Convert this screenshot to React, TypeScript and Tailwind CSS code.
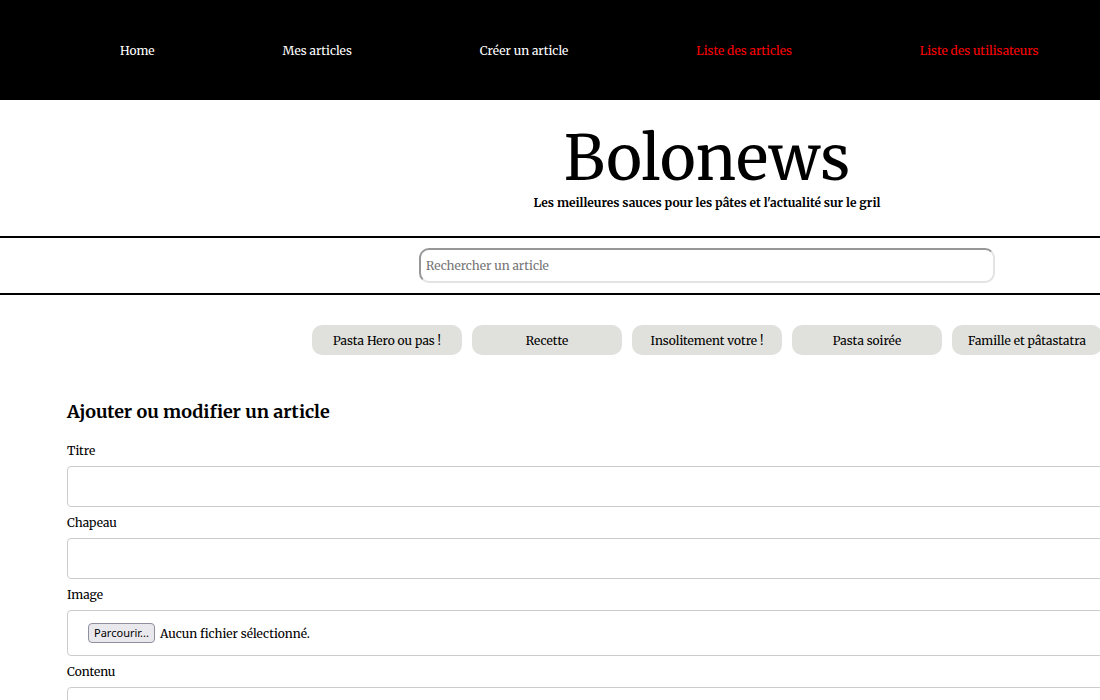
import React from "react";

const links = [
  { label: "Home", admin: false },
  { label: "Mes articles", admin: false },
  { label: "Créer un article", admin: false },
  { label: "Liste des articles", admin: true },
  { label: "Liste des utilisateurs", admin: true },
];

const categories = [
  "Pasta Hero ou pas !",
  "Recette",
  "Insolitement votre !",
  "Pasta soirée",
  "Famille et pâtastatra",
];

function TextField({ id, label }: { id: string; label: string }) {
  return (
    <div className="flex flex-col">
      <label htmlFor={id} className="flex h-[31px] items-center">{label}</label>
      <input id={id} type="text" className="h-[41px] rounded-[4px] border border-[#ccc] bg-white px-5" />
    </div>
  );
}

export default function App() {
  return (
    <div className="h-screen overflow-hidden bg-white">
      <div className="min-w-[1414px] font-['Merriweather','Liberation_Serif',serif] text-[12px] leading-5 text-black">
        <nav className="flex h-[100px] items-center gap-32 bg-black pt-[2px] pl-[120px]">
          {links.map((link) => (
            <a
              key={link.label}
              href="#"
              className={link.admin ? "whitespace-nowrap text-[#ff0000]" : "whitespace-nowrap text-white"}
            >
              {link.label}
            </a>
          ))}
        </nav>

        <header className="flex h-[136px] flex-col items-center pt-6">
          <h1 className="text-[61px] leading-[69px]">Bolonews</h1>
          <p className="font-bold">Les meilleures sauces pour les pâtes et l'actualité sur le gril</p>
        </header>

        <form className="flex justify-center border-y-2 border-black py-[10px]">
          <input
            type="search"
            aria-label="Rechercher un article"
            placeholder="Rechercher un article"
            className="h-[35px] w-[576px] rounded-[10px] border-2 border-t-[#979797] border-r-[#e3e3e3] border-b-[#e3e3e3] border-l-[#979797] bg-white px-[5px] placeholder:text-[#757575]"
          />
        </form>

        <div className="flex justify-center gap-[10px] pt-[30px]">
          {categories.map((category) => (
            <button key={category} type="button" className="h-[30px] w-[150px] rounded-[10px] bg-[#e0e1dc] pt-[2px] whitespace-nowrap">
              {category}
            </button>
          ))}
        </div>

        <main className="mx-auto max-w-7xl pt-[43px]">
          <h2 className="text-[18px] leading-7 font-bold">Ajouter ou modifier un article</h2>
          <form className="flex flex-col pt-[9px]">
            <TextField id="titre" label="Titre" />
            <TextField id="chapeau" label="Chapeau" />
            <div className="flex flex-col">
              <label htmlFor="image" className="flex h-[31px] items-center">Image</label>
              <div className="relative flex h-[46px] items-center rounded-[4px] border border-[#ccc] px-5">
                <input id="image" type="file" className="absolute inset-0 cursor-pointer opacity-0" />
                <span className="flex h-5 w-[67px] items-center justify-center rounded-[4px] border border-[#8f8f9d] bg-[#e9e9ed] font-['Noto_Sans',sans-serif] text-[11px]">
                  Parcourir...
                </span>
                <span className="pt-[2px] pl-[5px]">Aucun fichier sélectionné.</span>
              </div>
            </div>
            <div className="flex flex-col">
              <label htmlFor="contenu" className="flex h-[31px] items-center">Contenu</label>
              <textarea id="contenu" rows={8} className="rounded-[4px] border border-[#ccc] px-5 py-3" />
            </div>
          </form>
        </main>
      </div>
    </div>
  );
}
